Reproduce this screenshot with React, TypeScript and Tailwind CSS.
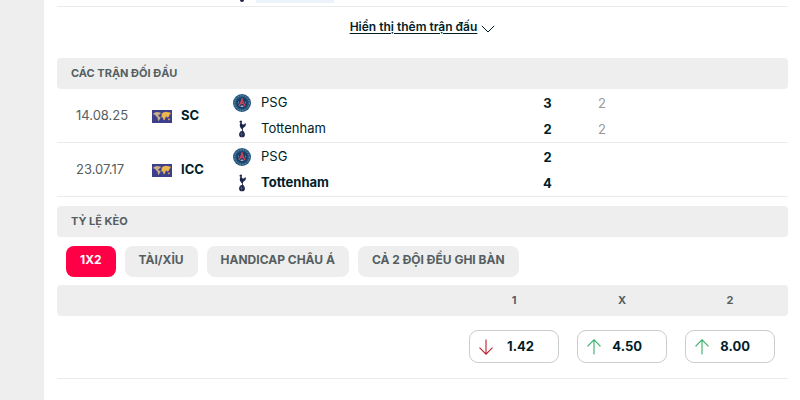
import React from 'react';

interface Team {
  name: string;
  crest: 'psg' | 'tottenham';
  score: number;
  extra?: number;
  winner?: boolean;
}

interface Match {
  date: string;
  league: string;
  teams: Team[];
}

const MATCHES: Match[] = [
  {
    date: '14.08.25',
    league: 'SC',
    teams: [
      { name: 'PSG', crest: 'psg', score: 3, extra: 2 },
      { name: 'Tottenham', crest: 'tottenham', score: 2, extra: 2 },
    ],
  },
  {
    date: '23.07.17',
    league: 'ICC',
    teams: [
      { name: 'PSG', crest: 'psg', score: 2 },
      { name: 'Tottenham', crest: 'tottenham', score: 4, winner: true },
    ],
  },
];

const TABS = ['1X2', 'TÀI/XỈU', 'HANDICAP CHÂU Á', 'CẢ 2 ĐỘI ĐỀU GHI BÀN'];

const ODDS = [
  { value: '1.42', up: false },
  { value: '4.50', up: true },
  { value: '8.00', up: true },
];

function PsgCrest() {
  return (
    <svg viewBox="0 0 18 18" className="h-[18px] w-[18px]" aria-hidden="true">
      <circle cx="9" cy="9" r="9" fill="#24567d" />
      <circle cx="9" cy="9" r="7.3" fill="none" stroke="#7fa3bd" strokeWidth="1" strokeDasharray="1.2 1.3" />
      <circle cx="9" cy="9" r="5.6" fill="#1a3c66" />
      <path d="M9 4.4 L9.5 7 L10.6 9.6 L12.2 12 M9 4.4 L8.5 7 L7.4 9.6 L5.8 12" fill="none" stroke="#c8475a" strokeWidth="1.4" />
      <path d="M7 9.4 H11" stroke="#c8475a" strokeWidth="1.2" />
      <path d="M7.2 12.8 Q9 10.4 10.8 12.8 Z" fill="#d9d9dd" />
      <path d="M5.4 7.5 v2 M12.6 7.5 v2" stroke="#6e9abb" strokeWidth="0.8" />
    </svg>
  );
}

function TottenhamCrest() {
  return (
    <svg viewBox="0 0 18 18" className="h-[18px] w-[18px]" aria-hidden="true">
      <g fill="#1c2348">
        <path d="M7.2 0.8 L8.4 0.6 L9 1.6 L8.7 3.3 L9.6 4.6 L11 4.6 L12 3.2 L12.9 3.7 L12.7 5.6 L11.5 7 L10.3 7.8 L9.8 9 L10 11.8 L9 11.8 L9 9.4 L7.9 8.3 L6.9 6.6 L6.8 4.6 L7.5 2.8 L6.2 1.9 Z" />
        <path d="M7.5 11.2 H10.8 V12 H7.5 Z" />
        <circle cx="9" cy="14.4" r="2.9" />
      </g>
      <path d="M7 13.8 Q9 15.2 11 13.8 M8.6 12 Q8 14.5 8.8 16.8" fill="none" stroke="#7d84a3" strokeWidth="0.4" />
    </svg>
  );
}

function WorldFlag() {
  return (
    <svg viewBox="0 0 20 13" className="h-[13px] w-5 shrink-0" aria-hidden="true">
      <rect width="20" height="13" fill="#3c3f8c" />
      <path d="M1.4 3.2 L4.4 2 L8.4 2.4 L8.8 3.6 L7.2 4.8 L6 5.8 L7.6 6.8 L8.8 7.8 L7.8 9 L6.6 11.2 L5.8 9.8 L5.6 7.6 L4.2 6.6 L3 4.8 L1.4 4.6 Z" fill="#c9ae86" />
      <path d="M9.2 4.2 L11 2.4 L14 1.8 L18.2 2.4 L18.8 3.8 L17.4 5 L17 6.4 L15.8 7.8 L14.8 6.8 L13.9 6.6 L13.4 8 L12.5 10 L11.5 10.2 L11.1 7.8 L9.4 7.2 L9.2 5.8 L10.2 5 Z" fill="#ecb54e" />
      <path d="M15.8 8.8 L17.6 8.6 L17.8 10 L16.2 10.2 Z" fill="#d8a85c" />
    </svg>
  );
}

function OddsArrow({ up }: { up: boolean }) {
  return up ? (
    <svg viewBox="0 0 14 16" className="h-4 w-3.5" fill="none" stroke="#35b068" strokeWidth="1.1" aria-hidden="true">
      <path d="M7 15.5 V0.8 M0.5 7.4 L7 0.8 L13.5 7.4" />
    </svg>
  ) : (
    <svg viewBox="0 0 14 16" className="h-4 w-3.5" fill="none" stroke="#b8222f" strokeWidth="1.1" aria-hidden="true">
      <path d="M7 0.5 V15.2 M0.5 8.6 L7 15.2 L13.5 8.6" />
    </svg>
  );
}

function SectionHeader({ title }: { title: string }) {
  return (
    <h2 className="flex h-[31px] items-center rounded-sm bg-[#eeeeee] px-3.5 text-[11px] font-bold text-[#555e61]">
      {title}
    </h2>
  );
}

function MatchRow({ match }: { match: Match }) {
  return (
    <tr className="border-b border-[#eaeaea]">
      <td className="w-[95px] pl-[19px] text-[13px] text-[#555e61]">{match.date}</td>
      <td className="w-[81px]">
        <div className="flex items-center gap-[9px] text-[13px] font-bold">
          <WorldFlag />
          {match.league}
        </div>
      </td>
      <td>
        {match.teams.map((team) => (
          <div key={team.name} className="flex h-[26px] items-center gap-2.5">
            {team.crest === 'psg' ? <PsgCrest /> : <TottenhamCrest />}
            <span className={team.winner ? 'font-bold' : ''}>{team.name}</span>
          </div>
        ))}
      </td>
      <td className="w-[55px] text-center font-bold">
        {match.teams.map((team) => (
          <div key={team.name} className="h-[26px] leading-[26px]">{team.score}</div>
        ))}
      </td>
      <td className="w-[213px] pl-[23px] text-[#999999]">
        {match.teams.map((team) => (
          <div key={team.name} className="h-[26px] leading-[26px]">{team.extra}</div>
        ))}
      </td>
    </tr>
  );
}

export default function App() {
  return (
    <div className="flex min-h-screen bg-white font-['Inter',sans-serif] text-[13px] text-[#001e28]">
      <aside className="w-11 shrink-0 bg-[#eeeeee]" />

      <main className="min-w-0 flex-1 pr-3 pl-[13px]">
        {/* Tail of the previous match row */}
        <div className="flex h-[7px] items-start border-b border-[#eaeaea] pl-[183px]">
          <span className="h-0.5 w-1 rounded-b-full bg-[#1c2348]" />
          <span className="ml-3 h-[3px] w-[78px] bg-[#edf3fb]" />
        </div>

        <div className="flex h-[51px] justify-center pt-2.5">
          <button type="button" className="flex h-5 cursor-pointer items-center gap-1 text-xs font-semibold">
            <span className="underline underline-offset-2">Hiển thị thêm trận đấu</span>
            <svg viewBox="0 0 14 8" className="mt-1 h-2 w-3.5" fill="none" stroke="#001e28" strokeWidth="1" aria-hidden="true">
              <path d="M0.8 0.8 L7 7 L13.2 0.8" />
            </svg>
          </button>
        </div>

        <section>
          <SectionHeader title="CÁC TRẬN ĐỐI ĐẦU" />
          <table className="w-full [&_td]:pt-px">
            <tbody>
              {MATCHES.map((match) => (
                <MatchRow key={match.date} match={match} />
              ))}
            </tbody>
          </table>
        </section>

        <section className="mt-[9px]">
          <SectionHeader title="TỶ LỆ KÈO" />
          <div className="flex gap-[9px] px-[9px] pt-[9px] pb-2">
            {TABS.map((tab, i) => (
              <button
                key={tab}
                type="button"
                className={`h-[31px] cursor-pointer rounded-lg px-3.5 pb-1 text-xs font-bold whitespace-nowrap ${
                  i === 0 ? 'bg-[#ff0046] text-white' : 'bg-[#eeeeee] text-[#555e61]'
                }`}
              >
                {tab}
              </button>
            ))}
          </div>

          <table className="w-full">
            <thead>
              <tr className="h-[31px] text-[11px] text-[#555e61] *:bg-[#eeeeee]">
                <td className="rounded-l-sm" />
                <th className="w-[108px]">1</th>
                <th className="w-[108px]">X</th>
                <th className="w-[108px]">2</th>
                <td className="w-1 rounded-r-sm" />
              </tr>
            </thead>
            <tbody>
              <tr className="border-b border-[#eaeaea]">
                <td />
                {ODDS.map((odd) => (
                  <td key={odd.value} className="px-[9px] pt-3.5 pb-[15px]">
                    <button
                      type="button"
                      className="flex h-[33px] w-full cursor-pointer items-center rounded-[9px] border border-[#c8cdcd] pr-6 pl-[9px] font-bold"
                    >
                      <OddsArrow up={odd.up} />
                      <span className="flex-1 text-right">{odd.value}</span>
                    </button>
                  </td>
                ))}
                <td />
              </tr>
            </tbody>
          </table>
        </section>
      </main>
    </div>
  );
}
